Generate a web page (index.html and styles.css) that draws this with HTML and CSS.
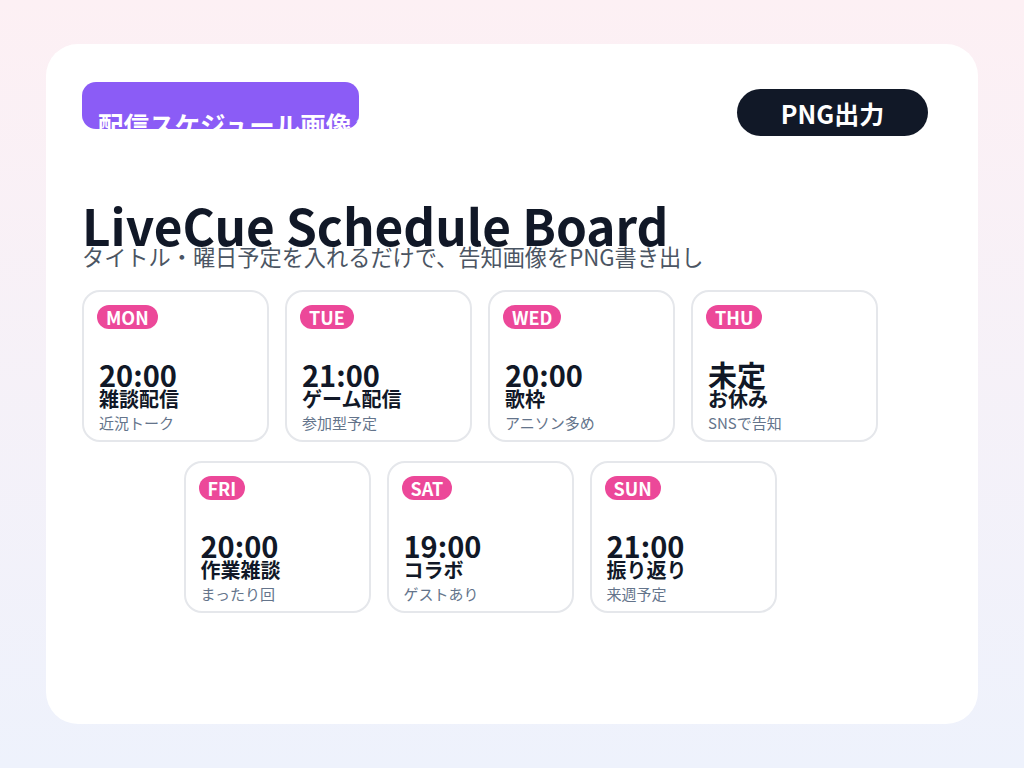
FILE: index.html
```html
<!DOCTYPE html>
<html lang="ja">
<head>
<meta charset="utf-8">
<title>LiveCue Schedule Board</title>
<link rel="stylesheet" href="styles.css">
</head>
<body>
<main class="board">
  <header class="board-head">
    <div class="tag">配信スケジュール画像メーカー</div>
    <button class="export">PNG出力</button>
  </header>
  <h1 class="title">LiveCue Schedule Board</h1>
  <p class="lead">タイトル・曜日予定を入れるだけで、告知画像をPNG書き出し</p>
  <section class="week">
    <div class="day"><span class="dow">MON</span><div class="time">20:00</div><div class="name">雑談配信</div><div class="note">近況トーク</div></div>
    <div class="day"><span class="dow">TUE</span><div class="time">21:00</div><div class="name">ゲーム配信</div><div class="note">参加型予定</div></div>
    <div class="day"><span class="dow">WED</span><div class="time">20:00</div><div class="name">歌枠</div><div class="note">アニソン多め</div></div>
    <div class="day"><span class="dow">THU</span><div class="time">未定</div><div class="name">お休み</div><div class="note">SNSで告知</div></div>
    <div class="day"><span class="dow">FRI</span><div class="time">20:00</div><div class="name">作業雑談</div><div class="note">まったり回</div></div>
    <div class="day"><span class="dow">SAT</span><div class="time">19:00</div><div class="name">コラボ</div><div class="note">ゲストあり</div></div>
    <div class="day"><span class="dow">SUN</span><div class="time">21:00</div><div class="name">振り返り</div><div class="note">来週予定</div></div>
  </section>
</main>
</body>
</html>
```

FILE: styles.css
```css
* { box-sizing: border-box; }
html, body { height: 100%; }
body {
  margin: 0;
  padding: 44px 46px;
  background: linear-gradient(180deg, #fdf0f4 0%, #eef2fc 100%);
  font-family: "Noto Sans CJK JP", "Noto Sans", sans-serif;
  color: #111827;
}
.board {
  background: #ffffff;
  border-radius: 32px;
  height: 680px;
  padding: 38px 36px;
}
.board-head {
  display: flex;
  justify-content: space-between;
  align-items: flex-start;
}
.tag {
  width: 277px;
  height: 47px;
  overflow: hidden;
  white-space: nowrap;
  background: #8b5cf6;
  color: #ffffff;
  border-radius: 14px;
  padding: 26px 0 0 16px;
  font-size: 25.5px;
  font-weight: 700;
  line-height: 32px;
}
.export {
  margin: 7px 14px 0 0;
  width: 191px;
  height: 47px;
  border: 0;
  border-radius: 24px;
  background: #111827;
  color: #ffffff;
  font-family: inherit;
  font-size: 25px;
  font-weight: 700;
  padding: 0;
}
.title {
  margin: 64px 0 0 0;
  font-size: 49.5px;
  font-weight: 700;
  line-height: 1;
  letter-spacing: 0;
}
.lead {
  margin: -7px 0 0 0;
  font-size: 22.2px;
  line-height: 1.2;
  color: #4b5563;
}
.week {
  width: 796px;
  margin-top: 21px;
  display: flex;
  flex-wrap: wrap;
  justify-content: center;
  gap: 19px 16px;
}
.day {
  width: 187px;
  height: 152px;
  border: 2px solid #e5e7eb;
  border-radius: 18px;
  padding: 13px 13px 0 13px;
  display: flex;
  flex-direction: column;
  align-items: flex-start;
}
.dow {
  height: 24px;
  line-height: 24px;
  padding: 0 9px;
  border-radius: 12px;
  background: #ec4899;
  color: #ffffff;
  font-size: 18px;
  font-weight: 700;
}
.time {
  margin-top: 32px;
  font-size: 29px;
  font-weight: 700;
  line-height: 26px;
  padding-left: 2px;
}
.name {
  margin-top: 2px;
  font-size: 20px;
  font-weight: 700;
  line-height: 20px;
  padding-left: 2px;
}
.note {
  margin-top: 6px;
  font-size: 15px;
  line-height: 15px;
  padding-left: 2px;
  color: #64748b;
}
```
